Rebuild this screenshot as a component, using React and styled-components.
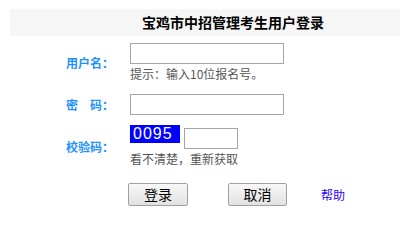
import styled, { createGlobalStyle } from "styled-components";

const GlobalStyle = createGlobalStyle`
  body {
    margin: 0;
    background: #fff;
    font-family: "Noto Sans CJK SC", "Liberation Sans", sans-serif;
    font-size: 12px;
  }
`;

const Page = styled.div`
  width: 400px;
  height: 229px;
  overflow: hidden;
`;

const TitleBar = styled.div`
  margin: 9px 0 0 10px;
  height: 27px;
  background-color: #f6f6f6;
  display: flex;
  align-items: center;
  padding-left: 132px;
`;

const Title = styled.h2`
  margin: 0;
  font-size: 14px;
  font-weight: bold;
  color: #000;
  line-height: 27px;
`;

const Row = styled.div`
  display: grid;
  grid-template-columns: 130px 1fr;
  align-items: center;
  margin-top: ${({ $top }) => $top}px;
`;

const Label = styled.label`
  padding-left: 66px;
  font-size: 12px;
  font-weight: bold;
  color: #1e90ff;
  white-space: nowrap;
`;

const Field = styled.div`
  display: flex;
  flex-direction: column;
  align-items: flex-start;
`;

const Input = styled.input`
  box-sizing: border-box;
  width: ${({ $width }) => $width}px;
  height: 21px;
  margin: 0;
  padding: 1px 3px;
  border: 1px solid #a5a5a5;
  background: #fff;
  font-size: 12px;
  outline: none;
`;

const Hint = styled.p`
  margin: 2px 0 0;
  font-size: 12px;
  line-height: 16px;
  color: #555;
`;

const CodeLine = styled.div`
  display: flex;
  align-items: flex-start;
  gap: 4px;

  > input {
    margin-top: 3px;
  }
`;

const Captcha = styled.span`
  display: inline-block;
  width: 50px;
  height: 18px;
  background-color: #0000ff;
  color: #fff;
  font-family: "Liberation Sans", Arial, sans-serif;
  font-size: 16px;
  line-height: 18px;
  letter-spacing: 1px;
  padding-left: 3px;
  box-sizing: border-box;
`;

const Actions = styled.div`
  display: flex;
  align-items: center;
  margin: 16px 0 0 128px;
`;

const Button = styled.button`
  box-sizing: border-box;
  width: ${({ $width }) => $width || 60}px;
  height: 23px;
  margin: 0 ${({ $gap }) => $gap || 0}px 0 0;
  padding: 0;
  border: 1px solid #a0a0a0;
  border-radius: 2px;
  background: linear-gradient(#f8f8f8, #e1e1e1);
  color: #000;
  font-family: "Noto Sans CJK SC", sans-serif;
  font-size: 14px;
  line-height: 21px;
`;

const HelpLink = styled.a`
  color: #2b00ff;
  font-size: 12px;
  text-decoration: none;
`;

export default function App() {
  return (
    <Page>
      <GlobalStyle />
      <TitleBar>
        <Title>宝鸡市中招管理考生用户登录</Title>
      </TitleBar>

      <Row $top={7}>
        <Label htmlFor="user">用户名：</Label>
        <Field>
          <Input id="user" type="text" $width={154} />
          <Hint>提示：输入10位报名号。</Hint>
        </Field>
      </Row>

      <Row $top={12}>
        <Label htmlFor="pwd">密　码：</Label>
        <Field>
          <Input id="pwd" type="password" $width={154} />
        </Field>
      </Row>

      <Row $top={10}>
        <Label htmlFor="code">校验码：</Label>
        <Field>
          <CodeLine>
            <Captcha>0095</Captcha>
            <Input id="code" type="text" $width={54} />
          </CodeLine>
          <Hint>看不清楚，重新获取</Hint>
        </Field>
      </Row>

      <Actions>
        <Button type="submit" $gap={40}>登录</Button>
        <Button type="button" $width={59} $gap={34}>取消</Button>
        <HelpLink href="#">帮助</HelpLink>
      </Actions>
    </Page>
  );
}
